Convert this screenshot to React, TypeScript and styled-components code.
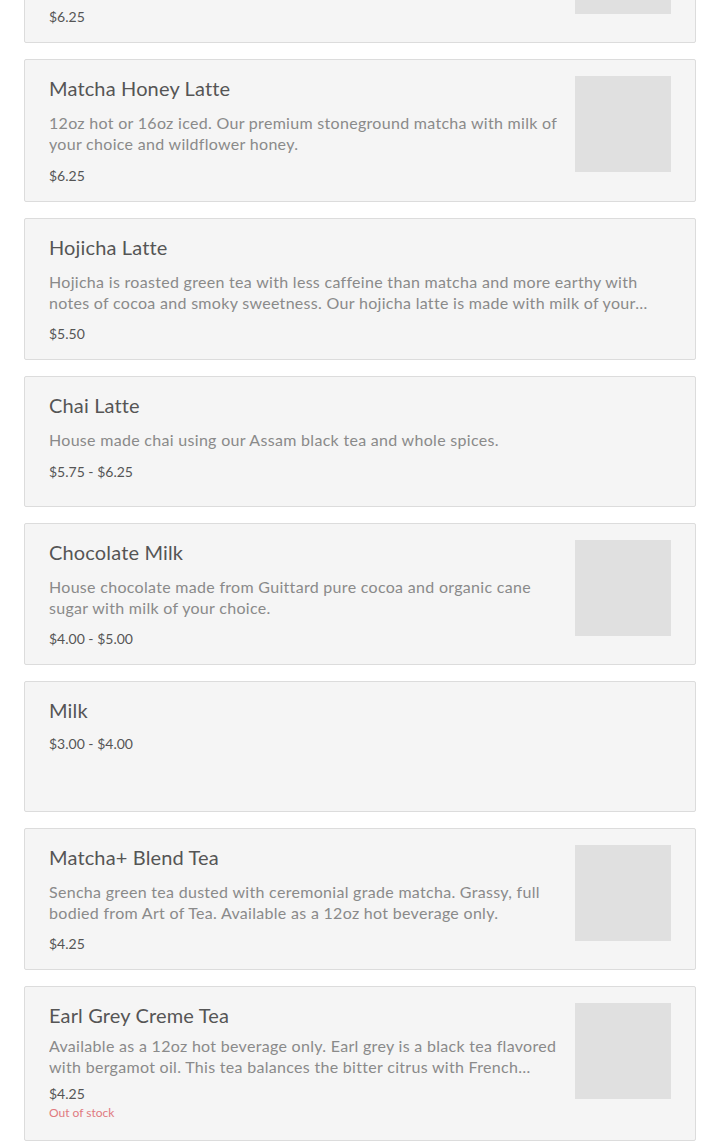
import React from "react";
import styled, { createGlobalStyle } from "styled-components";

const Global = createGlobalStyle`
  html, body { margin: 0; padding: 0; background: #ffffff; }
  body { font-family: Lato, "Open Sans", sans-serif; -webkit-font-smoothing: antialiased; }
  * { box-sizing: border-box; }
`;

const List = styled.div`
  display: flex;
  flex-direction: column;
  gap: 16px;
  padding: 0 24px 8px;
  margin-top: -99.5px;
`;

const Card = styled.div`
  display: flex;
  gap: 18px;
  min-height: 130.5px;
  padding: 16px 24px 15px 24px;
  background: #f5f5f5;
  border: 1px solid #dcdcdc;
  border-radius: 2px;
`;

const Info = styled.div`
  flex: 1;
  min-width: 0;
  display: flex;
  flex-direction: column;
`;

const Title = styled.div`
  font-size: 20px;
  line-height: 26px;
  letter-spacing: 0.15px;
  color: #555555;
  margin-top: -1px;
`;

const Desc = styled.div<{ $tight?: boolean }>`
  margin-top: ${(p) => (p.$tight ? "7px" : "11px")};
  font-size: 16px;
  line-height: 21px;
  letter-spacing: 0.3px;
  color: #8a8a8a;
  display: -webkit-box;
  -webkit-line-clamp: 2;
  -webkit-box-orient: vertical;
  overflow: hidden;
`;

const Price = styled.div<{ $tight?: boolean; $afterDesc?: boolean }>`
  margin-top: ${(p) => (p.$tight ? "7px" : p.$afterDesc ? "11.5px" : "11px")};
  font-size: 14px;
  line-height: 20px;
  color: #555555;
`;

const Stock = styled.div`
  font-size: 12px;
  line-height: 16px;
  color: #e07a80;
  margin-top: 1px;
  margin-bottom: 4px;
`;

const Thumb = styled.div`
  flex: 0 0 96px;
  width: 96px;
  height: 96px;
  background: #e0e0e0;
`;

type Item = {
  name: string;
  desc?: string;
  price: string;
  image?: boolean;
  out?: boolean;
};

const items: Item[] = [
  {
    name: "Matcha Latte",
    desc: "12oz hot or 16oz iced. Our premium stoneground matcha with milk of your choice.",
    price: "$6.25",
    image: true,
  },
  {
    name: "Matcha Honey Latte",
    desc: "12oz hot or 16oz iced. Our premium stoneground matcha with milk of your choice and wildflower honey.",
    price: "$6.25",
    image: true,
  },
  {
    name: "Hojicha Latte",
    desc: "Hojicha is roasted green tea with less caffeine than matcha and more earthy with notes of cocoa and smoky sweetness. Our hojicha latte is made with milk of your choice and a touch of sweetness.",
    price: "$5.50",
  },
  {
    name: "Chai Latte",
    desc: "House made chai using our Assam black tea and whole spices.",
    price: "$5.75 - $6.25",
  },
  {
    name: "Chocolate Milk",
    desc: "House chocolate made from Guittard pure cocoa and organic cane sugar with milk of your choice.",
    price: "$4.00 - $5.00",
    image: true,
  },
  { name: "Milk", price: "$3.00 - $4.00" },
  {
    name: "Matcha+ Blend Tea",
    desc: "Sencha green tea dusted with ceremonial grade matcha. Grassy, full bodied from Art of Tea. Available as a 12oz hot beverage only.",
    price: "$4.25",
    image: true,
  },
  {
    name: "Earl Grey Creme Tea",
    desc: "Available as a 12oz hot beverage only. Earl grey is a black tea flavored with bergamot oil. This tea balances the bitter citrus with French vanilla for a creamy finish.",
    price: "$4.25",
    image: true,
    out: true,
  },
];

export default function App() {
  return (
    <>
      <Global />
      <List>
        {items.map((it) => (
          <Card key={it.name}>
            <Info>
              <Title>{it.name}</Title>
              {it.desc && <Desc $tight={it.out}>{it.desc}</Desc>}
              <Price $tight={it.out} $afterDesc={!!it.desc}>
                {it.price}
              </Price>
              {it.out && <Stock>Out of stock</Stock>}
            </Info>
            {it.image && <Thumb />}
          </Card>
        ))}
      </List>
    </>
  );
}
